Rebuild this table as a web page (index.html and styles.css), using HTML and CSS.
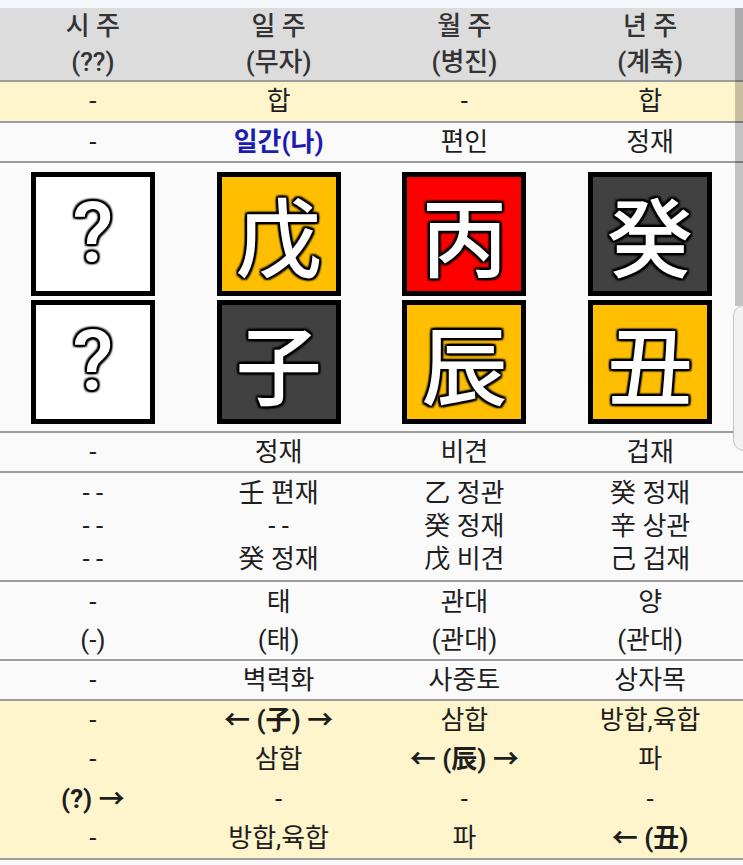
FILE: index.html
```html
<!DOCTYPE html>
<html lang="ko">
<head>
<meta charset="utf-8">
<title>사주</title>
<link rel="stylesheet" href="styles.css">
</head>
<body>
<div class="topstrip"></div>
<div class="table">
  <div class="row head">
    <div class="cell"><div>시 주</div><div>(??)</div></div>
    <div class="cell"><div>일 주</div><div>(무자)</div></div>
    <div class="cell"><div>월 주</div><div>(병진)</div></div>
    <div class="cell"><div>년 주</div><div>(계축)</div></div>
  </div>
  <div class="row yellow r41">
    <div class="cell">-</div>
    <div class="cell">합</div>
    <div class="cell">-</div>
    <div class="cell">합</div>
  </div>
  <div class="row r40">
    <div class="cell">-</div>
    <div class="cell me">일간(나)</div>
    <div class="cell">편인</div>
    <div class="cell">정재</div>
  </div>
  <div class="row boxes">
    <div class="cell"><div class="box white">?</div><div class="box white">?</div></div>
    <div class="cell"><div class="box gold">戊</div><div class="box dark">子</div></div>
    <div class="cell"><div class="box red">丙</div><div class="box gold">辰</div></div>
    <div class="cell"><div class="box dark">癸</div><div class="box gold">丑</div></div>
  </div>
  <div class="row r40">
    <div class="cell">-</div>
    <div class="cell">정재</div>
    <div class="cell">비견</div>
    <div class="cell">겁재</div>
  </div>
  <div class="row hidden">
    <div class="cell"><div>- -</div><div>- -</div><div>- -</div></div>
    <div class="cell"><div>壬 편재</div><div>- -</div><div>癸 정재</div></div>
    <div class="cell"><div>乙 정관</div><div>癸 정재</div><div>戊 비견</div></div>
    <div class="cell"><div>癸 정재</div><div>辛 상관</div><div>己 겁재</div></div>
  </div>
  <div class="row unseong">
    <div class="cell"><div>-</div><div>(-)</div></div>
    <div class="cell"><div>태</div><div>(태)</div></div>
    <div class="cell"><div>관대</div><div>(관대)</div></div>
    <div class="cell"><div>양</div><div>(관대)</div></div>
  </div>
  <div class="row r40">
    <div class="cell">-</div>
    <div class="cell">벽력화</div>
    <div class="cell">사중토</div>
    <div class="cell">상자목</div>
  </div>
  <div class="row yellow rel">
    <div class="cell"><div>-</div><div>-</div><div class="b">(?) →</div><div>-</div></div>
    <div class="cell"><div class="b">← (子) →</div><div>삼합</div><div>-</div><div>방합,육합</div></div>
    <div class="cell"><div>삼합</div><div class="b">← (辰) →</div><div>-</div><div>파</div></div>
    <div class="cell"><div>방합,육합</div><div>파</div><div>-</div><div class="b">← (丑)</div></div>
  </div>
</div>
<div class="scrolltrack"></div>
<div class="edgetab"></div>
</body>
</html>
```

FILE: styles.css
```css
html, body {
  margin: 0;
  padding: 0;
  background: #f8f8f8;
}
body {
  width: 743px;
  height: 865px;
  overflow: hidden;
  position: relative;
  font-family: Roboto, "Noto Sans CJK KR", sans-serif;
  font-size: 26px;
  color: #1e1e1e;
}
.topstrip {
  height: 8px;
  background: #f3f6fa;
}
.table {
  display: flex;
  flex-direction: column;
}
.row {
  display: grid;
  grid-template-columns: repeat(4, 1fr);
  border-bottom: 2px solid #9c9c9c;
  background: #fafafa;
  box-sizing: border-box;
}
.cell {
  display: flex;
  flex-direction: column;
  align-items: center;
  justify-content: center;
  text-align: center;
  white-space: nowrap;
}
.head {
  height: 74px;
  background: #dcdcdc;
  color: #333;
  line-height: 36px;
  font-weight: 500;
}
.yellow { background: #fff5cc; }
.r41 { height: 41px; line-height: 39px; }
.r40 { height: 40px; line-height: 38px; }
.me { color: #1c1cae; font-weight: 700; }
.boxes {
  height: 270px;
  padding: 9px 0 6px;
}
.boxes .cell {
  gap: 4px;
  justify-content: flex-start;
}
.box {
  width: 124px;
  height: 124px;
  box-sizing: border-box;
  border: 5px solid #000;
  display: flex;
  align-items: center;
  justify-content: center;
  font-family: "Noto Sans CJK KR", sans-serif;
  font-weight: 500;
  font-size: 86px;
  line-height: 1;
  color: #fff;
  text-shadow: 2px 0 1px #000, -2px 0 1px #000, 0 2px 1px #000, 0 -2px 1px #000,
    2px 2px 2px #000, -2px -2px 2px #000, 2px -2px 2px #000, -2px 2px 2px #000;
}
.box.white { background: #fff; font-family: Roboto, sans-serif; font-weight: 500; font-size: 84px; }
.box.gold { background: #ffbf00; }
.box.dark { background: #414141; }
.box.red { background: #fe0000; }
.hidden {
  height: 109px;
  line-height: 33px;
}
.unseong {
  height: 79px;
  line-height: 38px;
}
.rel {
  height: 159px;
  line-height: 39.25px;
}
.b { font-weight: 700; }
.scrolltrack {
  position: absolute;
  right: 0;
  top: 8px;
  width: 8px;
  height: 298px;
  background: rgba(0, 0, 0, 0.22);
}
.edgetab {
  position: absolute;
  right: -12px;
  top: 305px;
  width: 22px;
  height: 146px;
  box-sizing: border-box;
  background: #f2f2f2;
  border: 1px solid #c4c4c4;
  border-radius: 12px;
}
```
